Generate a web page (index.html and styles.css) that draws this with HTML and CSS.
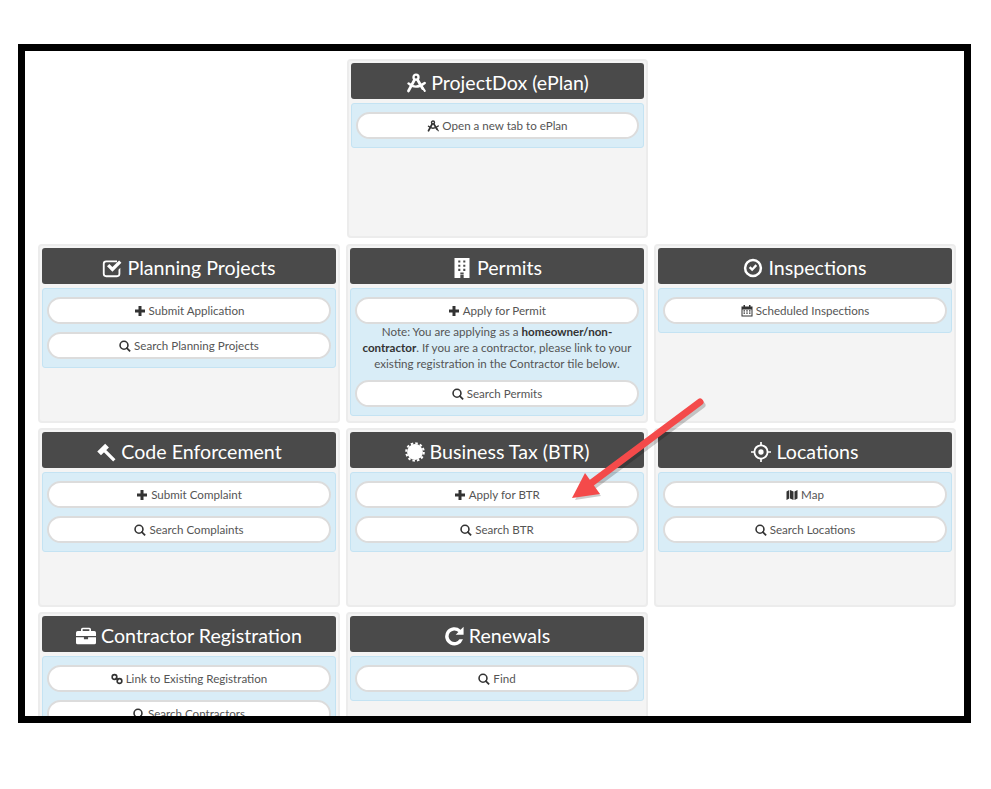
FILE: index.html
```html
<!DOCTYPE html>
<html lang="en">
<head>
<meta charset="utf-8">
<title>Portal</title>
<link rel="stylesheet" href="styles.css">
</head>
<body>
<svg class="sprite" width="0" height="0" aria-hidden="true">
  <symbol id="i-plus" viewBox="0 0 24 24"><path d="M9 2h6v7h7v6h-7v7H9v-7H2V9h7z"/></symbol>
  <symbol id="i-search" viewBox="0 0 24 24"><path fill-rule="evenodd" d="M10 1a9.500 9.500 0 1 1 0 19 9.500 9.500 0 0 1 0-19zm0 3.200a6.300 6.300 0 1 0 0 12.600 6.300 6.300 0 0 0 0-12.600z"/><path d="M16 14l7.500 7.500-2.500 2.500-7.500-7.500z"/></symbol>
  <symbol id="i-check-square" viewBox="0 0 24 24"><path d="M5 3h13v2.200H5A1.800 1.800 0 0 0 3.200 7v12A1.800 1.800 0 0 0 5 20.800h13a1.800 1.800 0 0 0 1.800-1.800v-5l2.200-2.200V19a4 4 0 0 1-4 4H5a4 4 0 0 1-4-4V7a4 4 0 0 1 4-4z"/><path d="M6 10l2.800-2.800 3.700 3.700 8-8L23.300 5.700 12.500 16.500z"/></symbol>
  <symbol id="i-building" viewBox="0 0 24 24"><path fill-rule="evenodd" d="M3 0h18v24h-7v-4h-4v4H3zM7.500 3v2.500H10V3zm6 0v2.500H16V3zM7.500 8v2.500H10V8zm6 0v2.500H16V8zm-6 5v2.500H10V13zm6 0v2.500H16V13zM10 17.500v2h4v-2z"/></symbol>
  <symbol id="i-check-circle" viewBox="0 0 24 24"><path fill-rule="evenodd" d="M12 1a11 11 0 1 1 0 22 11 11 0 0 1 0-22zm0 3a8 8 0 1 0 0 16 8 8 0 0 0 0-16z"/><path d="M7 12l2-2 2 2 4-4.500 2 2-6 6.500z"/></symbol>
  <symbol id="i-gavel" viewBox="0 0 24 24"><path d="M1.500 11.500L11 2l4.500 4.500L6 16zM11.400 8.600L23.400 20.600 20.600 23.400 8.600 11.400z"/></symbol>
  <symbol id="i-cert" viewBox="0 0 24 24"><circle cx="12" cy="12" r="9.500"/><circle cx="12" cy="12" r="10.500" fill="none" stroke="currentColor" stroke-width="2.500" stroke-dasharray="3 2.500"/></symbol>
  <symbol id="i-target" viewBox="0 0 24 24"><path fill-rule="evenodd" d="M11 0h2v3.100a9 9 0 0 1 7.900 7.900H24v2h-3.100a9 9 0 0 1-7.900 7.900V24h-2v-3.100A9 9 0 0 1 3.100 13H0v-2h3.100A9 9 0 0 1 11 3.100zm1 5.200a6.800 6.800 0 1 0 0 13.600 6.800 6.800 0 0 0 0-13.600z"/><circle cx="12" cy="12" r="3.200"/></symbol>
  <symbol id="i-briefcase" viewBox="0 0 24 24"><path fill-rule="evenodd" d="M8 2h8a2 2 0 0 1 2 2v2h4a2 2 0 0 1 2 2v4H0V8a2 2 0 0 1 2-2h4V4a2 2 0 0 1 2-2zm0 2v2h8V4z"/><path d="M0 13.500h9.500V16h5v-2.500H24V20a2 2 0 0 1-2 2H2a2 2 0 0 1-2-2z"/></symbol>
  <symbol id="i-repeat" viewBox="0 0 24 24"><path d="M23.500 1v9.500H14l3.300-3.300A7 7 0 1 0 18.500 16h4.300A11 11 0 1 1 19.900 4.400z"/></symbol>
  <symbol id="i-link" viewBox="0 0 24 24"><g fill="none" stroke="currentColor" stroke-width="3.200"><circle cx="7" cy="8" r="4.700"/><circle cx="17" cy="16" r="4.700"/><path d="M9 10l6 4"/></g></symbol>
  <symbol id="i-calendar" viewBox="0 0 24 24"><path fill-rule="evenodd" d="M5 0h3v3h8V0h3v3h4v20H1V3h4zM3 9v12h18V9zm2 1.500h3V13H5zm5.500 0h3V13h-3zm5.500 0h3V13h-3zM5 15h3v2.500H5zm5.500 0h3v2.500h-3zm5.500 0h3v2.500h-3z"/></symbol>
  <symbol id="i-map" viewBox="0 0 24 24"><path d="M1 5l5.500-3v17L1 22zM8 2l7 3v17l-7-3zM17 5l6-3v17l-6 3z"/></symbol>
  <symbol id="i-compass" viewBox="0 0 24 24"><g fill="none" stroke="currentColor" stroke-linecap="round"><circle cx="12" cy="5" r="3" stroke-width="2.800"/><path d="M10 8.500L3 21.500M14 8.500L20 18.500" stroke-width="3.400"/><path d="M3 12.500C9 18 16 17 22.500 12" stroke-width="2.800"/><path d="M20.500 18.500l2 3" stroke-width="2.400"/></g></symbol>
</svg>

<main class="frame">
  <div class="grid">
    <section class="tile tile-top">
      <h2 class="head"><svg class="ico-l"><use href="#i-compass"/></svg> ProjectDox (ePlan)</h2>
      <div class="panel">
        <a class="btn"><svg class="ico-s"><use href="#i-compass"/></svg> Open a new tab to ePlan</a>
      </div>
    </section>

    <section class="tile tile-first">
      <h2 class="head"><svg class="ico-l"><use href="#i-check-square"/></svg> Planning Projects</h2>
      <div class="panel">
        <a class="btn"><svg class="ico-s"><use href="#i-plus"/></svg> Submit Application</a>
        <a class="btn"><svg class="ico-s"><use href="#i-search"/></svg> Search Planning Projects</a>
      </div>
    </section>

    <section class="tile">
      <h2 class="head"><svg class="ico-l"><use href="#i-building"/></svg> Permits</h2>
      <div class="panel">
        <a class="btn"><svg class="ico-s"><use href="#i-plus"/></svg> Apply for Permit</a>
        <p class="note">Note: You are applying as a <b>homeowner/non-contractor</b>. If you are a contractor, please link to your existing registration in the Contractor tile below.</p>
        <a class="btn"><svg class="ico-s"><use href="#i-search"/></svg> Search Permits</a>
      </div>
    </section>

    <section class="tile">
      <h2 class="head"><svg class="ico-l"><use href="#i-check-circle"/></svg> Inspections</h2>
      <div class="panel">
        <a class="btn"><svg class="ico-s"><use href="#i-calendar"/></svg> Scheduled Inspections</a>
      </div>
    </section>

    <section class="tile">
      <h2 class="head"><svg class="ico-l"><use href="#i-gavel"/></svg> Code Enforcement</h2>
      <div class="panel">
        <a class="btn"><svg class="ico-s"><use href="#i-plus"/></svg> Submit Complaint</a>
        <a class="btn"><svg class="ico-s"><use href="#i-search"/></svg> Search Complaints</a>
      </div>
    </section>

    <section class="tile">
      <h2 class="head"><svg class="ico-l"><use href="#i-cert"/></svg> Business Tax (BTR)</h2>
      <div class="panel">
        <a class="btn"><svg class="ico-s"><use href="#i-plus"/></svg> Apply for BTR</a>
        <a class="btn"><svg class="ico-s"><use href="#i-search"/></svg> Search BTR</a>
      </div>
    </section>

    <section class="tile">
      <h2 class="head"><svg class="ico-l"><use href="#i-target"/></svg> Locations</h2>
      <div class="panel">
        <a class="btn"><svg class="ico-s"><use href="#i-map"/></svg> Map</a>
        <a class="btn"><svg class="ico-s"><use href="#i-search"/></svg> Search Locations</a>
      </div>
    </section>

    <section class="tile">
      <h2 class="head"><svg class="ico-l"><use href="#i-briefcase"/></svg> Contractor Registration</h2>
      <div class="panel">
        <a class="btn"><svg class="ico-s"><use href="#i-link"/></svg> Link to Existing Registration</a>
        <a class="btn"><svg class="ico-s"><use href="#i-search"/></svg> Search Contractors</a>
      </div>
    </section>

    <section class="tile">
      <h2 class="head"><svg class="ico-l"><use href="#i-repeat"/></svg> Renewals</h2>
      <div class="panel">
        <a class="btn"><svg class="ico-s"><use href="#i-search"/></svg> Find</a>
      </div>
    </section>
  </div>
</main>

<svg class="arrow" width="991" height="789" viewBox="0 0 991 789" aria-hidden="true">
  <path class="arrow-shadow" d="M702 405L592 487" />
  <path class="arrow-shadow-head" d="M575 500L587 478L601 496z"/>
  <path class="arrow-line" d="M700 402L590 484"/>
  <path class="arrow-head" d="M572 498L585 473L600 494z"/>
</svg>
</body>
</html>
```
FILE: styles.css
```css
* { box-sizing: border-box; }

html, body { margin: 0; padding: 0; background: #fff; }

body {
  position: relative;
  width: 991px;
  height: 789px;
  overflow: hidden;
  padding: 44px 0 0 18px;
  font-family: Lato, "Liberation Sans", sans-serif;
  color: #555;
}

.sprite { position: absolute; }

.frame {
  width: 953px;
  height: 679px;
  border: 7px solid #000;
  background: #fff;
  padding: 8px 7px 0 13px;
  overflow: hidden;
}

.grid {
  display: grid;
  grid-template-columns: repeat(3, 302px);
  grid-template-rows: 180px;
  grid-auto-rows: 179px;
  column-gap: 6px;
  row-gap: 5px;
}

.tile {
  height: 179px;
  background: #f4f4f4;
  border: 2px solid #ececec;
  border-radius: 4px;
  padding: 2px;
}

.tile-top {
  grid-column: 2;
  margin-left: 1px;
}

.tile-first { grid-column: 1; }

.head {
  margin: 0 0 4px;
  height: 36px;
  background: #4a4a4a;
  border-radius: 3px;
  color: #fff;
  font-size: 19.6px;
  font-weight: 400;
  line-height: 40px;
  text-align: center;
  white-space: nowrap;
}

.panel {
  background: #d9edf7;
  border: 1px solid #c4e3f3;
  border-radius: 3px;
  padding: 8px 4px;
}

.btn {
  display: block;
  height: 27px;
  background: #fff;
  border: 2px solid #dcdcdc;
  border-radius: 14px;
  color: #555;
  font-size: 11.6px;
  line-height: 23px;
  text-align: center;
  white-space: nowrap;
}

.btn + .btn { margin-top: 8px; }

.note {
  margin: 0 0 8px;
  font-size: 11.6px;
  line-height: 16px;
  text-align: center;
  color: #555;
}

.note b { color: #333; font-weight: 700; }

.ico-l {
  width: 20px;
  height: 20px;
  fill: #fff;
  color: #fff;
  vertical-align: -3px;
}

.ico-s {
  width: 12px;
  height: 12px;
  fill: #333;
  color: #333;
  vertical-align: -2px;
}

.arrow {
  position: absolute;
  top: 0;
  left: 0;
  pointer-events: none;
}

.arrow-line {
  stroke: #f44a4a;
  stroke-width: 7;
  stroke-linecap: round;
  fill: none;
}

.arrow-head { fill: #f44a4a; }

.arrow-shadow {
  stroke: rgba(0, 0, 0, .2);
  stroke-width: 7;
  stroke-linecap: round;
  fill: none;
}

.arrow-shadow-head { fill: rgba(0, 0, 0, .2); }
```
